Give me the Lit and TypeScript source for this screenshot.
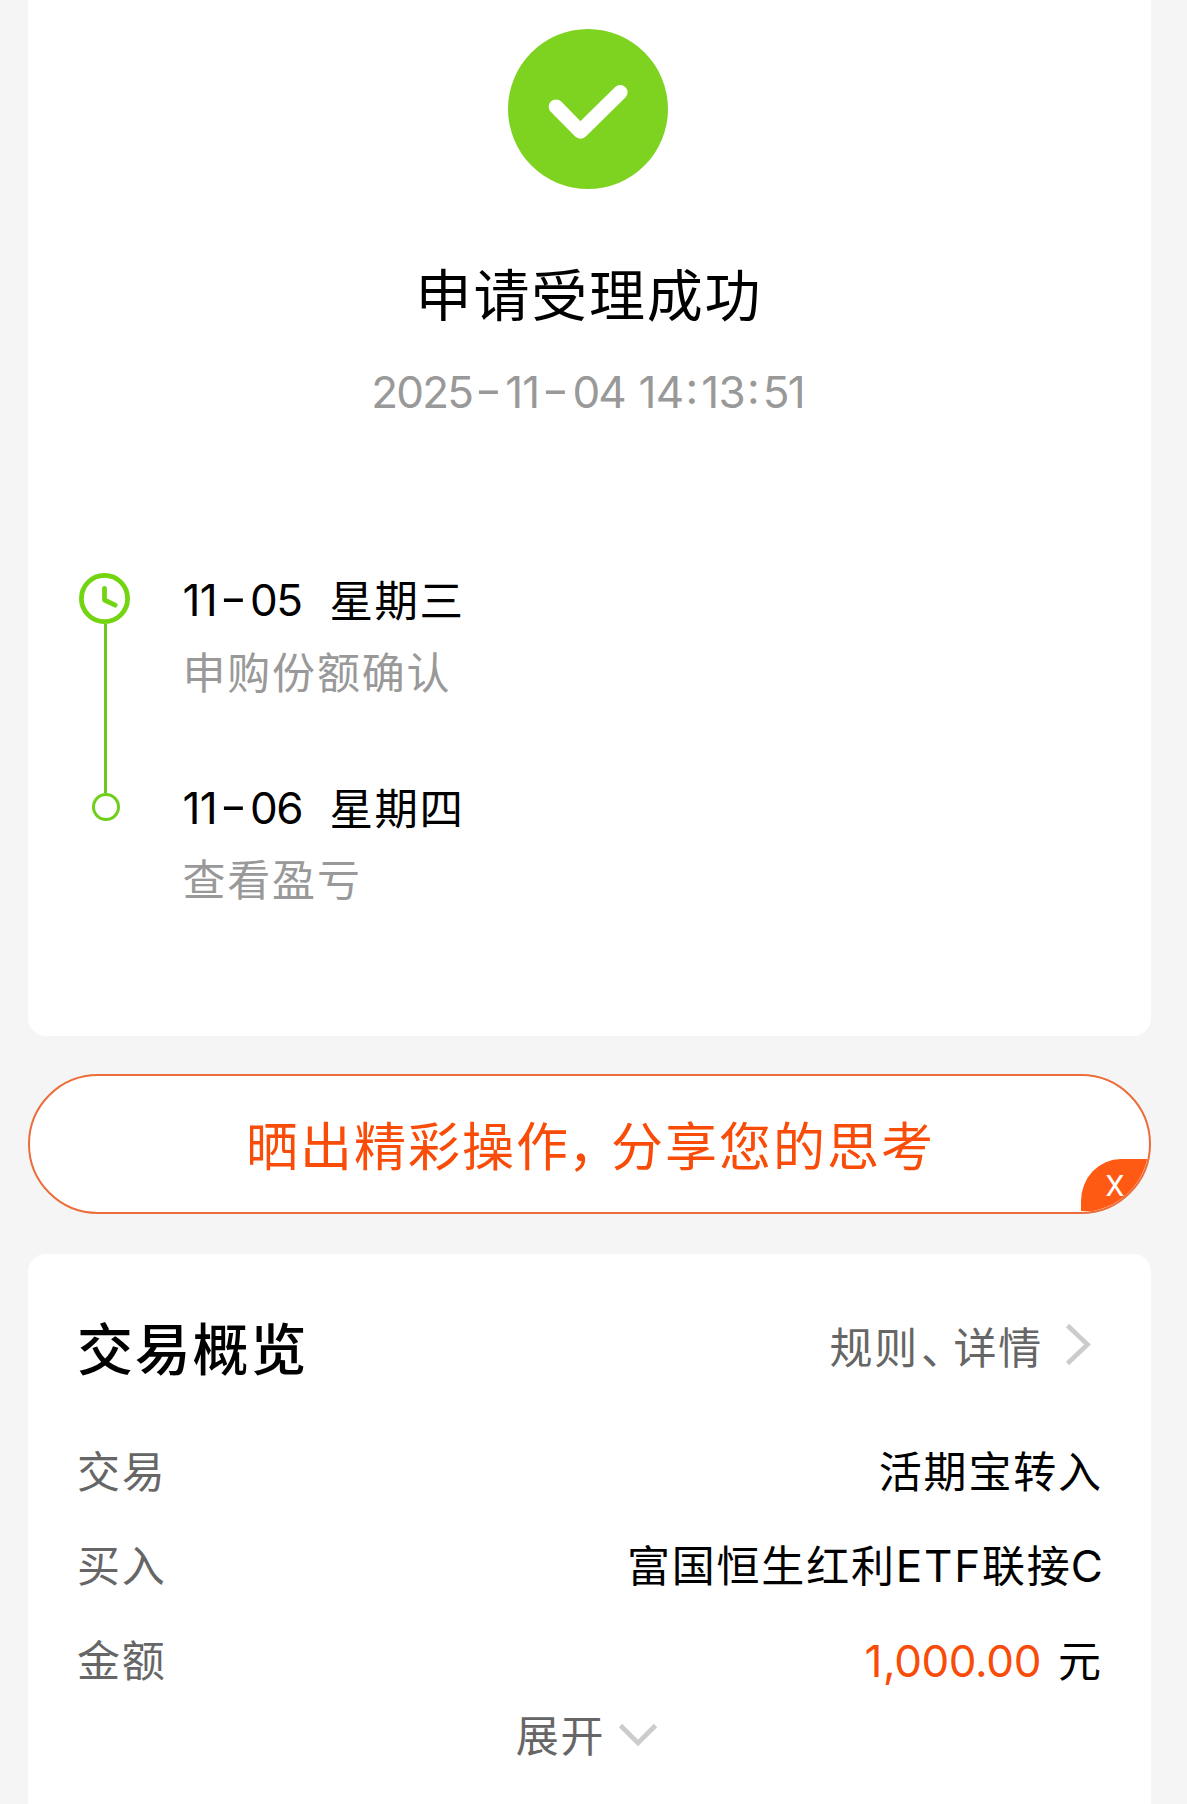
import { LitElement, html, css, svg } from "lit";
import { customElement, property } from "lit/decorators.js";

/** Characters that take their own advance width or font. */
const CLASSES: Record<string, string> = {
  "1": "one",
  "-": "dash",
  ":": "colon",
  "，": "wide-comma",
  "、": "pause",
  E: "latin",
  T: "latin",
  F: "latin",
  C: "latin last",
};

const run = (text: string) =>
  [...text].map((c) => (CLASSES[c] ? html`<span class=${CLASSES[c]}>${c}</span>` : c));

const glyphs = css`
  .num {
    font-family: Inter, "Noto Sans", sans-serif;
    font-feature-settings: "calt" 0;
  }
  .one {
    margin-right: 1px;
  }
  .dash {
    display: inline-block;
    width: 33px;
    text-align: center;
    letter-spacing: 0;
    transform: translateY(-2px) scaleX(1.35);
  }
  .colon {
    display: inline-block;
    width: 19px;
    text-align: center;
    letter-spacing: 0;
    transform: translateY(-4px);
  }
  .wide-comma {
    font-feature-settings: "halt";
    margin: 0 15px 0 -2px;
  }
  .pause {
    font-feature-settings: "halt";
    margin: 0 9px 0 2px;
  }
`;

@customElement("status-header")
class StatusHeader extends LitElement {
  static styles = [
    glyphs,
    css`
      :host {
        display: flex;
        flex-direction: column;
        align-items: center;
        padding: 29px 3px 0 0;
      }
      .icon {
        display: block;
        width: 160px;
        height: 160px;
      }
      .title {
        margin-top: 75px;
        padding-left: 2px;
        font-size: 56px;
        line-height: 60px;
        letter-spacing: 1.8px;
        color: #000;
      }
      .time {
        margin-top: 38px;
        font-size: 44px;
        line-height: 60px;
        letter-spacing: -1.8px;
        word-spacing: 3px;
        white-space: pre;
        color: #999;
      }
    `,
  ];

  render() {
    return html`
      <svg class="icon" viewBox="0 0 160 160">
        <circle cx="80" cy="80" r="80" fill="#7ed321" />
        <path
          d="M48 77.7 72.4 102.5 112.3 63.3"
          fill="none"
          stroke="#fff"
          stroke-width="14.6"
          stroke-linecap="round"
          stroke-linejoin="round"
        />
      </svg>
      <div class="title">申请受理成功</div>
      <div class="time num">${run("2025-11-04 14:13:51")}</div>
    `;
  }
}

@customElement("timeline-step")
class TimelineStep extends LitElement {
  @property() date = "";
  @property() day = "";
  @property() note = "";
  @property({ type: Boolean }) current = false;

  static styles = [
    glyphs,
    css`
      :host {
        display: flex;
        gap: 50.5px;
        height: 207.7px;
      }
      .rail {
        display: flex;
        flex-direction: column;
        align-items: center;
        width: 53px;
      }
      .clock {
        flex: none;
        display: block;
        width: 51px;
        height: 51px;
        margin: 5px 2px 0 0;
      }
      .line {
        flex: 1;
        width: 3px;
        background: #6cc820;
      }
      .stub {
        flex: none;
        width: 3px;
        height: 17px;
        background: #6cc820;
      }
      .dot {
        box-sizing: border-box;
        width: 28px;
        height: 28px;
        border: 3px solid #6fcf1b;
        border-radius: 50%;
      }
      .when {
        display: flex;
        padding-top: 2px;
        font-size: 44px;
        line-height: 60px;
        color: #000;
      }
      .date {
        width: 147px;
        letter-spacing: -1.6px;
      }
      .day {
        font-size: 43.5px;
        letter-spacing: 1.5px;
      }
      .note {
        margin-top: 12.5px;
        font-size: 43px;
        line-height: 60px;
        letter-spacing: 1.8px;
        color: #999;
      }
    `,
  ];

  render() {
    return html`
      <div class="rail">
        ${this.current
          ? html`<svg class="clock" viewBox="0 0 51 51">
                ${svg`<circle cx="25.5" cy="25.5" r="23.1" fill="none" stroke="#73d411" stroke-width="4.8" />
                <path d="M25.5 15.5v11.5l10.6 5.2" fill="none" stroke="#73d411" stroke-width="4.8" stroke-linecap="round" stroke-linejoin="round" />`}
              </svg>
              <div class="line"></div>`
          : html`<div class="stub"></div>
              <div class="dot"></div>`}
      </div>
      <div>
        <div class="when">
          <span class="date num">${run(this.date)}</span><span class="day">${this.day}</span>
        </div>
        <div class="note">${this.note}</div>
      </div>
    `;
  }
}

@customElement("share-banner")
class ShareBanner extends LitElement {
  static styles = [
    glyphs,
    css`
      :host {
        position: relative;
        box-sizing: border-box;
        display: flex;
        justify-content: center;
        height: 140px;
        border: 2px solid #ec6c3a;
        border-radius: 70px;
        background: #fff;
        overflow: hidden;
      }
      .text {
        padding-left: 2px;
        font-size: 52px;
        line-height: 139px;
        letter-spacing: 2px;
        color: #f94c08;
      }
      .close {
        position: absolute;
        right: -2px;
        bottom: 1px;
        width: 70px;
        height: 52px;
        border-top-left-radius: 40px 42px;
        background: #ff5a14;
        color: #fff;
        font-family: Roboto, sans-serif;
        font-size: 30px;
        line-height: 54px;
        text-indent: 24.5px;
      }
    `,
  ];

  render() {
    return html`
      <div class="text">${run("晒出精彩操作，分享您的思考")}</div>
      <div class="close">X</div>
    `;
  }
}

@customElement("trade-overview")
class TradeOverview extends LitElement {
  static styles = [
    glyphs,
    css`
      :host {
        display: block;
        padding: 51px 50px 0 49px;
      }
      .head {
        display: flex;
        justify-content: space-between;
        align-items: center;
        height: 80px;
        margin-bottom: 40px;
      }
      .title {
        font-size: 56px;
        font-weight: 500;
        letter-spacing: 1.8px;
        color: #000;
      }
      .more {
        display: flex;
        align-items: center;
        padding-right: 9px;
        font-size: 43px;
        letter-spacing: 1.8px;
        color: #666;
      }
      .right {
        width: 27px;
        height: 43px;
        margin: 0 0 2px 22px;
      }
      .row {
        display: flex;
        justify-content: space-between;
        font-size: 43px;
        line-height: 94.3px;
        letter-spacing: 1.8px;
        color: #666;
      }
      .value {
        margin-right: -1.8px;
        color: #000;
      }
      .latin {
        font-family: Inter, sans-serif;
        font-size: 44px;
        line-height: 1;
      }
      .last {
        letter-spacing: 0;
        margin-left: -1px;
      }
      .amount {
        font-size: 44px;
        letter-spacing: -0.4px;
        color: #f94c08;
        margin-right: 17px;
      }
      .expand {
        display: flex;
        justify-content: center;
        align-items: center;
        padding-right: 4px;
        font-size: 43px;
        line-height: 56px;
        letter-spacing: 1.8px;
        color: #666;
      }
      .down {
        width: 40px;
        height: 24px;
        margin: 0 0 2px 13px;
      }
      .stroke {
        fill: none;
        stroke: #ccc;
        stroke-width: 4.6;
      }
    `,
  ];

  render() {
    return html`
      <div class="head">
        <span class="title">交易概览</span>
        <span class="more">
          <span>${run("规则、详情")}</span>
          <svg class="right" viewBox="0 0 27 43">
            <path class="stroke" d="M2.5 2.5 22.5 21.5 2.5 40.5" />
          </svg>
        </span>
      </div>
      <div class="row"><span>交易</span><span class="value">活期宝转入</span></div>
      <div class="row">
        <span>买入</span><span class="value">${run("富国恒生红利ETF联接C")}</span>
      </div>
      <div class="row">
        <span>金额</span
        ><span class="value"><span class="amount num">${run("1,000.00")}</span>元</span>
      </div>
      <div class="expand">
        <span>展开</span>
        <svg class="down" viewBox="0 0 40 24">
          <path class="stroke" d="M2.5 2.5 20 20 37.5 2.5" />
        </svg>
      </div>
    `;
  }
}

@customElement("app-root")
class AppRoot extends LitElement {
  static styles = css`
    :host {
      box-sizing: border-box;
      display: flex;
      flex-direction: column;
      height: 1804px;
      padding: 0 36px 0 28px;
      overflow: hidden;
      background: #f5f5f5;
      font-family: "Noto Sans", "Noto Sans CJK SC", sans-serif;
    }
    .result {
      box-sizing: border-box;
      flex: none;
      height: 1036px;
      border-radius: 0 0 18px 18px;
      background: #fff;
    }
    .steps {
      padding: 146px 0 0 51px;
    }
    .share {
      flex: none;
      margin: 38px 0 40px;
    }
    .overview {
      flex: 1;
      border-radius: 18px 18px 0 0;
      background: #fff;
    }
  `;

  render() {
    return html`
      <section class="result">
        <status-header></status-header>
        <div class="steps">
          <timeline-step current date="11-05" day="星期三" note="申购份额确认"></timeline-step>
          <timeline-step date="11-06" day="星期四" note="查看盈亏"></timeline-step>
        </div>
      </section>
      <share-banner class="share"></share-banner>
      <trade-overview class="overview"></trade-overview>
    `;
  }
}
